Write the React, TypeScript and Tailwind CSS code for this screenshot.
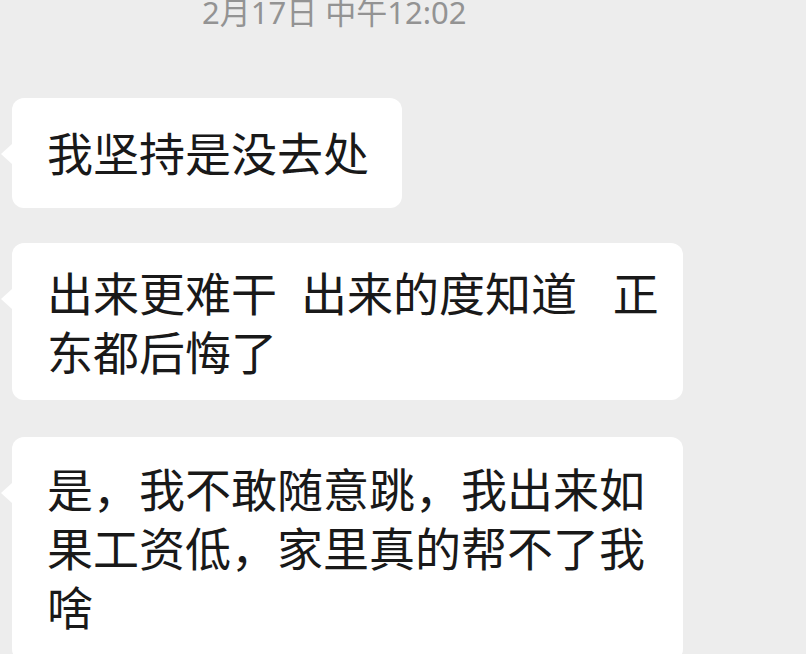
import React from "react";

type Msg = {
  lines: string[];
  width: string;
  pad: string;
  gap: string;
};

const messages: Msg[] = [
  { lines: ["我坚持是没去处"], width: "w-[390px]", pad: "pt-[26px] pb-[25px]", gap: "mt-[74px]" },
  {
    lines: ["出来更难干  出来的度知道   正", "东都后悔了"],
    width: "w-[671px]",
    pad: "pt-[21px] pb-[18px]",
    gap: "mt-[35px]",
  },
  {
    lines: ["是，我不敢随意跳，我出来如", "果工资低，家里真的帮不了我", "啥"],
    width: "w-[671px]",
    pad: "pt-[23px] pb-[24px]",
    gap: "mt-[37px]",
  },
];

function Bubble({ msg }: { msg: Msg }) {
  return (
    <div className={`relative ml-[12px] rounded-[12px] bg-white pl-[35px] pr-[33px] ${msg.width} ${msg.pad} ${msg.gap}`}>
      {/* tail */}
      <span className="absolute left-[-11px] top-[46px] h-0 w-0 border-y-[10px] border-r-[11px] border-y-transparent border-r-white" />
      {msg.lines.map((line, i) => (
        <p key={i} className="whitespace-pre text-[46px] leading-[59px] text-[#191919]">
          {line}
        </p>
      ))}
    </div>
  );
}

export default function App() {
  return (
    <div
      className="h-[654px] w-[806px] overflow-hidden bg-[#ededed]"
      style={{ fontFamily: '"Noto Sans", "Noto Sans CJK SC", sans-serif' }}
    >
      <div className="h-[24px] pl-[202px] text-[31px] leading-[24px] text-[#939393]">
        2月17日 中午12:02
      </div>
      {messages.map((m, i) => (
        <Bubble key={i} msg={m} />
      ))}
    </div>
  );
}
